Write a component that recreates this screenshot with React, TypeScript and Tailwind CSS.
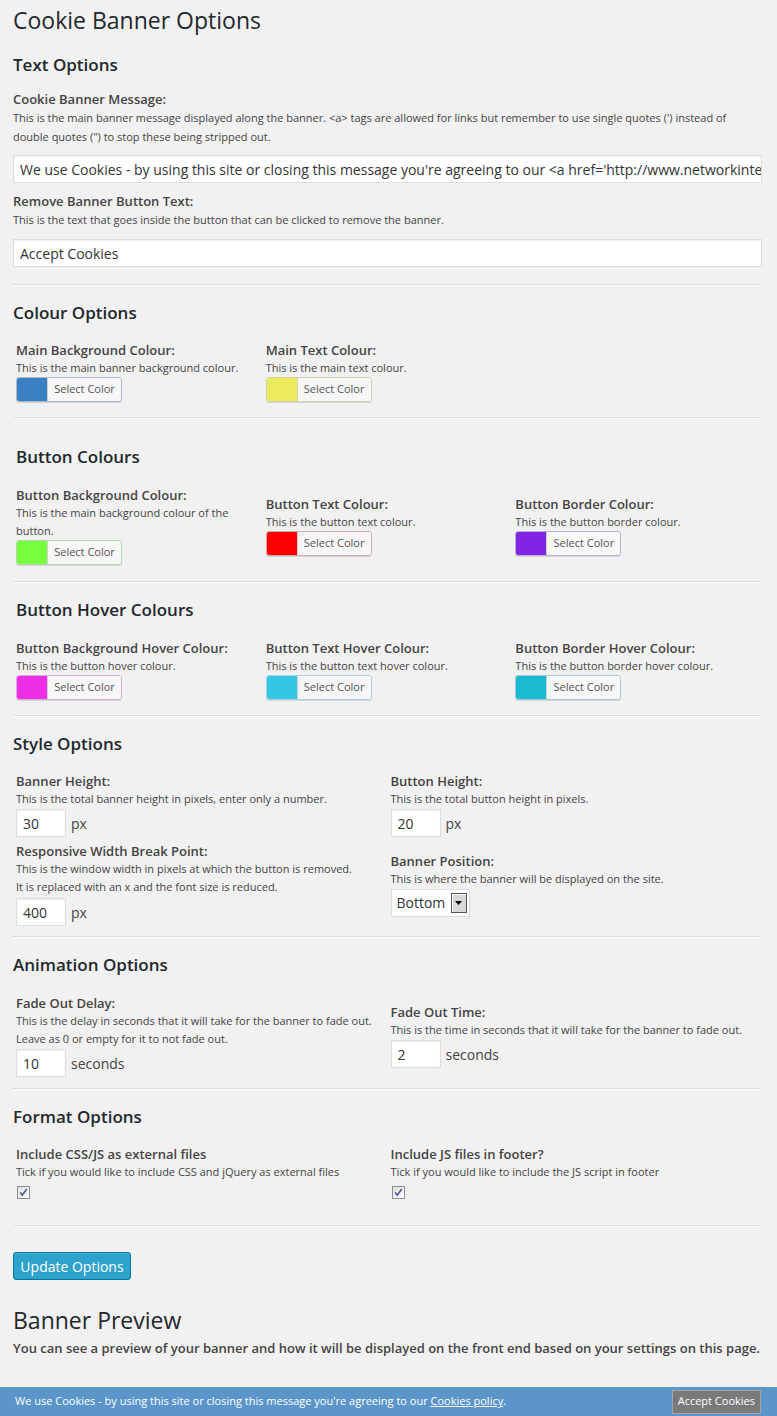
import React from "react";

const COLOUR_MAIN = [
  { label: "Main Background Colour:", desc: "This is the main banner background colour.", swatch: "bg-[#3a7fc3]", edge: "border-[#a9b9c8]" },
  { label: "Main Text Colour:", desc: "This is the main text colour.", swatch: "bg-[#ebeb5e]", edge: "border-[#d2d2a8]" },
];

const COLOUR_BUTTON = [
  { label: "Button Background Colour:", desc: "This is the main background colour of the button.", swatch: "bg-[#77ff3f]", edge: "border-[#b5d6aa]" },
  { label: "Button Text Colour:", desc: "This is the button text colour.", swatch: "bg-[#ff0000]", edge: "border-[#dba6a6]" },
  { label: "Button Border Colour:", desc: "This is the button border colour.", swatch: "bg-[#8224e3]", edge: "border-[#c0afd6]" },
];

const COLOUR_HOVER = [
  { label: "Button Background Hover Colour:", desc: "This is the button hover colour.", swatch: "bg-[#ee2ee6]", edge: "border-[#d8acd6]" },
  { label: "Button Text Hover Colour:", desc: "This is the button text hover colour.", swatch: "bg-[#35c6e6]", edge: "border-[#a9d2dc]" },
  { label: "Button Border Hover Colour:", desc: "This is the button border hover colour.", swatch: "bg-[#1bbad3]", edge: "border-[#a3cdd4]" },
];

function Heading({ children, className = "" }: { children: React.ReactNode; className?: string }) {
  return <h3 className={`text-[17px] leading-[22px] font-semibold text-[#23282d] ${className}`}>{children}</h3>;
}

function Rule({ className = "" }: { className?: string }) {
  return <div className={`border-t border-[#dcdcdc] border-b border-b-[#fafafa] ${className}`} />;
}

function Label({ children }: { children: React.ReactNode }) {
  return <div className="text-[13px] leading-[18px] font-semibold text-[#444]">{children}</div>;
}

function Desc({ children }: { children: React.ReactNode }) {
  return <div className="text-[11px] leading-[18px] text-[#444]">{children}</div>;
}

function ColorButton({ swatch, edge }: { swatch: string; edge: string }) {
  return (
    <div className={`flex h-[25px] w-[106px] rounded-[3px] border ${edge} overflow-hidden shadow-[0_1px_0_#d5d5d5]`}>
      <span className={`w-[30px] ${swatch}`} />
      <span className="flex-1 flex items-center justify-center bg-[#f7f7f7] border-l border-[#d0d0d0] text-[11px] text-[#555]">
        Select Color
      </span>
    </div>
  );
}

function ColourRow({ items }: { items: typeof COLOUR_MAIN }) {
  return (
    <div className="grid grid-cols-3 items-center">
      {items.map((item) => (
        <div key={item.label} className="px-[3px]">
          <Label>{item.label}</Label>
          <div className="pr-[6px]">
            <Desc>{item.desc}</Desc>
          </div>
          <ColorButton swatch={item.swatch} edge={item.edge} />
        </div>
      ))}
    </div>
  );
}

function NumberField({ value, unit, className = "" }: { value: string; unit: string; className?: string }) {
  return (
    <div className={`flex items-center ${className}`}>
      <input
        readOnly
        defaultValue={value}
        className="w-[50px] h-[28px] bg-white border border-[#ddd] shadow-[inset_0_1px_2px_rgba(0,0,0,0.07)] pl-[6px] text-[14px] text-[#333] outline-none"
      />
      <span className="ml-[5px] text-[14px] text-[#444]">{unit}</span>
    </div>
  );
}

function Checkbox() {
  return (
    <svg width="13" height="13" viewBox="0 0 13 13" className="mt-[5px] ml-[1px]">
      <defs>
        <linearGradient id="cb" x1="0" y1="0" x2="1" y2="1">
          <stop offset="0" stopColor="#dcdcdc" />
          <stop offset="1" stopColor="#ffffff" />
        </linearGradient>
      </defs>
      <rect x="0.5" y="0.5" width="12" height="12" fill="url(#cb)" stroke="#8e8f8f" />
      <path d="M3.2 6.4 L5.2 9.2 L9.8 3" fill="none" stroke="#4a5a9c" strokeWidth="1.6" />
    </svg>
  );
}

export default function App() {
  return (
    <div className="min-h-screen bg-[#f1f1f1] font-['Open_Sans',sans-serif] text-[#444]">
      <div className="pl-[13px] pr-[15px] pb-[60px]">
        <h2 className="pt-[6px] text-[23px] leading-[29px] text-[#23282d]">Cookie Banner Options</h2>

        <Heading className="mt-[19px]">Text Options</Heading>
        <div className="mt-[14px]">
          <Label>Cookie Banner Message:</Label>
          <div className="text-[11px] leading-[19px] pr-[20px]">
            This is the main banner message displayed along the banner. &lt;a&gt; tags are allowed for links but remember to use single quotes (') instead of double quotes (") to stop these being stripped out.
          </div>
          <input
            readOnly
            defaultValue="We use Cookies - by using this site or closing this message you're agreeing to our <a href='http://www.networkintellect.co.uk/cookies-policy/'>Cookies policy</a>."
            className="mt-[9px] w-full h-[28px] bg-white border border-[#ddd] shadow-[inset_0_1px_2px_rgba(0,0,0,0.07)] pl-[6px] text-[14px] text-[#333] outline-none"
          />
        </div>
        <div className="mt-[10px]">
          <div className="text-[13px] leading-[17px] font-semibold">Remove Banner Button Text:</div>
          <div className="text-[11px] leading-[19px]">This is the text that goes inside the button that can be clicked to remove the banner.</div>
          <input
            readOnly
            defaultValue="Accept Cookies"
            className="mt-[10px] w-full h-[28px] bg-white border border-[#ddd] shadow-[inset_0_1px_2px_rgba(0,0,0,0.07)] pl-[6px] text-[14px] text-[#333] outline-none"
          />
        </div>

        <Rule className="mt-[17px]" />
        <Heading className="mt-[16px]">Colour Options</Heading>
        <div className="mt-[17px]">
          <ColourRow items={COLOUR_MAIN} />
        </div>

        <Rule className="mt-[15px]" />
        <Heading className="mt-[27px] pl-[3px]">Button Colours</Heading>
        <div className="mt-[18px]">
          <ColourRow items={COLOUR_BUTTON} />
        </div>

        <Rule className="mt-[16px]" />
        <Heading className="mt-[16px] pl-[3px]">Button Hover Colours</Heading>
        <div className="mt-[18px]">
          <ColourRow items={COLOUR_HOVER} />
        </div>

        <Rule className="mt-[15px]" />
        <Heading className="mt-[16px]">Style Options</Heading>
        <div className="mt-[17px] grid grid-cols-2 items-center gap-y-[5px]">
          <div className="px-[3px]">
            <Label>Banner Height:</Label>
            <Desc>This is the total banner height in pixels, enter only a number.</Desc>
            <NumberField value="30" unit="px" className="mt-[1px]" />
          </div>
          <div className="px-[3px]">
            <Label>Button Height:</Label>
            <Desc>This is the total button height in pixels.</Desc>
            <NumberField value="20" unit="px" className="mt-[1px]" />
          </div>
          <div className="px-[3px]">
            <Label>Responsive Width Break Point:</Label>
            <Desc>This is the window width in pixels at which the button is removed.</Desc>
            <Desc>It is replaced with an x and the font size is reduced.</Desc>
            <NumberField value="400" unit="px" className="mt-[2px]" />
          </div>
          <div className="px-[3px]">
            <Label>Banner Position:</Label>
            <Desc>This is where the banner will be displayed on the site.</Desc>
            <div className="mt-[1px] flex items-center w-[79px] h-[28px] bg-white border border-[#ddd] pl-[5px] pr-[2px]">
              <span className="flex-1 text-[14px] text-[#333]">Bottom</span>
              <span className="flex items-center justify-center w-[16px] h-[20px] bg-[#d8d8d8] border border-[#555] shadow-[inset_1px_1px_0_#fff]">
                <svg width="7" height="4" viewBox="0 0 7 4">
                  <path d="M0 0 H7 L3.5 4 Z" fill="#000" />
                </svg>
              </span>
            </div>
          </div>
        </div>

        <Rule className="mt-[10px]" />
        <Heading className="mt-[16px]">Animation Options</Heading>
        <div className="mt-[18px] grid grid-cols-2 items-center">
          <div className="px-[3px]">
            <Label>Fade Out Delay:</Label>
            <Desc>This is the delay in seconds that it will take for the banner to fade out.</Desc>
            <Desc>Leave as 0 or empty for it to not fade out.</Desc>
            <NumberField value="10" unit="seconds" className="mt-[1px]" />
          </div>
          <div className="px-[3px]">
            <Label>Fade Out Time:</Label>
            <Desc>This is the time in seconds that it will take for the banner to fade out.</Desc>
            <NumberField value="2" unit="seconds" className="mt-[1px]" />
          </div>
        </div>

        <Rule className="mt-[11px]" />
        <Heading className="mt-[16px]">Format Options</Heading>
        <div className="mt-[17px] grid grid-cols-2 items-start">
          <div className="px-[3px]">
            <Label>Include CSS/JS as external files</Label>
            <Desc>Tick if you would like to include CSS and jQuery as external files</Desc>
            <Checkbox />
          </div>
          <div className="px-[3px]">
            <Label>Include JS files in footer?</Label>
            <Desc>Tick if you would like to include the JS script in footer</Desc>
            <Checkbox />
          </div>
        </div>

        <Rule className="mt-[26px]" />
        <button className="mt-[25px] h-[28px] w-[118px] rounded-[3px] bg-[#2ea2cc] border border-[#0074a2] shadow-[inset_0_1px_0_rgba(120,200,230,0.5)] text-[14px] text-white">
          Update Options
        </button>

        <h2 className="mt-[26px] text-[23px] leading-[29px] text-[#23282d]">Banner Preview</h2>
        <p className="mt-[4px] text-[13px] leading-[18px] font-semibold text-[#444]">
          You can see a preview of your banner and how it will be displayed on the front end based on your settings on this page.
        </p>
      </div>

      <div className="fixed bottom-0 left-0 right-0 h-[29px] bg-[#5b95c9] flex items-center justify-between pl-[15px] pr-[16px]">
        <span className="text-[11px] text-white">
          We use Cookies - by using this site or closing this message you're agreeing to our{" "}
          <span className="underline">Cookies policy</span>.
        </span>
        <span className="h-[24px] px-[5px] flex items-center bg-[#7a7a7a] border border-[#a5a5a5] text-[11px] text-white">
          Accept Cookies
        </span>
      </div>
    </div>
  );
}
